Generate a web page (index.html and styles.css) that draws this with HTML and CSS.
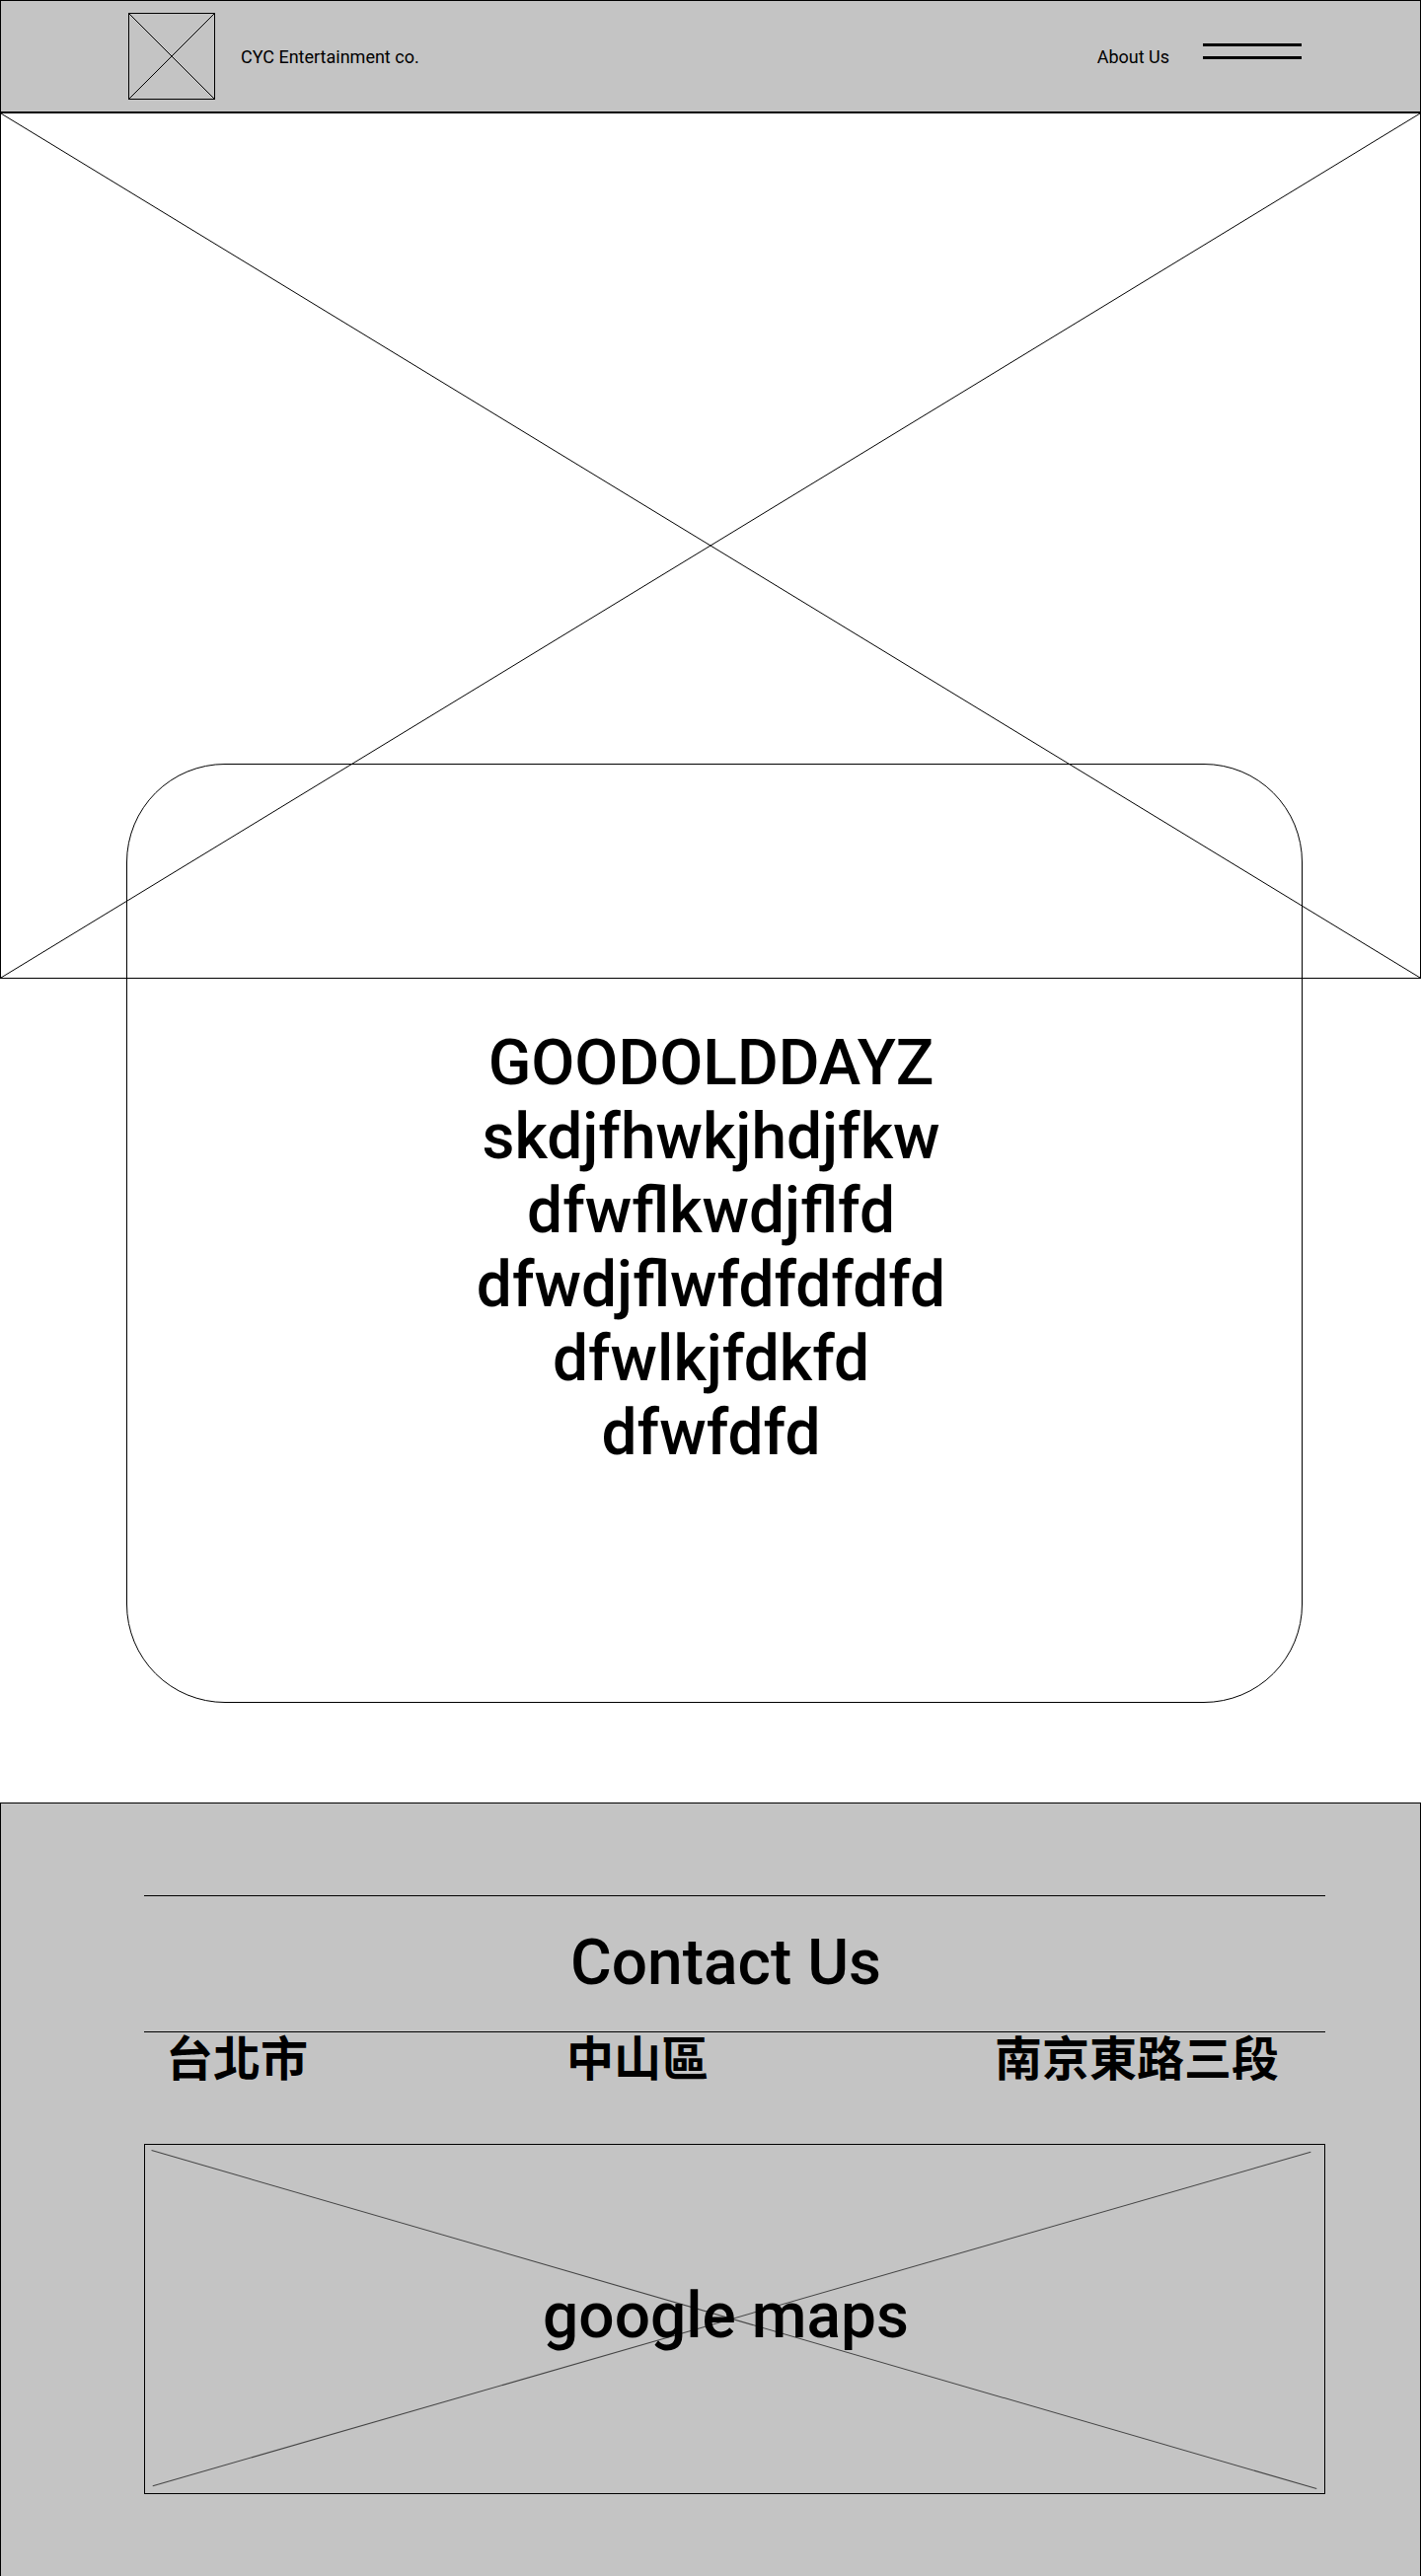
FILE: index.html
```html
<!DOCTYPE html>
<html lang="zh-Hant">
<head>
<meta charset="utf-8">
<title>CYC Entertainment co.</title>
<link rel="stylesheet" href="styles.css">
</head>
<body>
<header class="topbar">
  <div class="brand">
    <div class="logo">
      <svg class="xmark" viewBox="0 0 100 100" preserveAspectRatio="none" aria-hidden="true">
        <line x1="0" y1="0" x2="100" y2="100" vector-effect="non-scaling-stroke"/>
        <line x1="100" y1="0" x2="0" y2="100" vector-effect="non-scaling-stroke"/>
      </svg>
    </div>
    <span class="brand-name">CYC Entertainment co.</span>
  </div>
  <nav class="nav">
    <a class="nav-link" href="#">About Us</a>
    <button class="menu" type="button" aria-label="menu"><span class="menu-bar"></span><span class="menu-bar"></span></button>
  </nav>
</header>

<section class="hero">
  <svg class="xmark" viewBox="0 0 100 100" preserveAspectRatio="none" aria-hidden="true">
    <line x1="0" y1="0" x2="100" y2="100" vector-effect="non-scaling-stroke"/>
    <line x1="100" y1="0" x2="0" y2="100" vector-effect="non-scaling-stroke"/>
  </svg>
</section>

<section class="card">
  <p class="card-text">GOODOLDDAYZ<br>skdjfhwkjhdjfkw<br>dfwflkwdjflfd<br>dfwdjflwfdfdfdfd<br>dfwlkjfdkfd<br>dfwfdfd</p>
</section>

<footer class="footer">
  <div class="contact">
    <h2 class="contact-title">Contact Us</h2>
    <div class="address">
      <span class="addr-item">台北市</span>
      <span class="addr-item">中山區</span>
      <span class="addr-item">南京東路三段</span>
    </div>
    <div class="map">
      <svg class="map-x" viewBox="0 0 100 100" preserveAspectRatio="none" aria-hidden="true">
        <line x1="0.3" y1="1" x2="99.6" y2="99.3" vector-effect="non-scaling-stroke"/>
        <line x1="0.4" y1="98.5" x2="99.1" y2="1.5" vector-effect="non-scaling-stroke"/>
      </svg>
      <span class="map-label">google maps</span>
    </div>
  </div>
</footer>
</body>
</html>
```

FILE: styles.css
```css
* { box-sizing: border-box; }

html, body {
  margin: 0;
  padding: 0;
  background: #ffffff;
}

body {
  font-family: Roboto, "Noto Sans CJK TC", sans-serif;
  color: #000;
  overflow: hidden;
}

.xmark {
  position: absolute;
  inset: 0;
  width: 100%;
  height: 100%;
  stroke: #000;
  stroke-width: 1;
}

/* Header */
.topbar {
  height: 114px;
  background: #c4c4c4;
  border: 1px solid #000;
  display: flex;
  align-items: center;
  justify-content: space-between;
  padding: 0 120px 0 129px;
}

.brand {
  display: flex;
  align-items: center;
  gap: 26px;
}

.logo {
  position: relative;
  width: 88px;
  height: 88px;
  border: 1px solid #000;
}

.brand-name,
.nav-link {
  font-size: 18px;
  line-height: 21px;
  color: #000;
  text-decoration: none;
}

.nav {
  display: flex;
  align-items: center;
  gap: 34px;
}

.menu {
  display: flex;
  flex-direction: column;
  gap: 10px;
  width: 100px;
  padding: 0;
  margin: 0 0 11px 0;
  border: 0;
  background: transparent;
}

.menu-bar {
  display: block;
  width: 100px;
  height: 3px;
  background: #000;
}

/* Hero */
.hero {
  position: relative;
  height: 878px;
  border: 1px solid #000;
}

/* Card */
.card {
  position: relative;
  width: 1192px;
  height: 952px;
  margin: -218px 0 0 128px;
  border: 1px solid #000;
  border-radius: 100px;
  padding: 265px 7px 0 0;
}

.card-text {
  margin: 0;
  text-align: center;
  font-size: 64px;
  line-height: 75px;
  font-weight: 500;
}

/* Footer */
.footer {
  margin-top: 101px;
  height: 784px;
  background: #c4c4c4;
  border: 1px solid #000;
  border-bottom: 0;
  padding: 93px 0 0 145px;
}

.contact {
  width: 1197px;
}

.contact-title {
  margin: 0;
  height: 139px;
  border-top: 1px solid #000;
  border-bottom: 1px solid #000;
  padding: 30px 18px 0 0;
  text-align: center;
  font-size: 64px;
  line-height: 75px;
  font-weight: 500;
}

.address {
  display: grid;
  grid-template-columns: 406px 434px 1fr;
  padding-left: 22px;
  margin-top: -1px;
  font-family: "Noto Sans CJK TC", sans-serif;
  font-weight: 700;
  font-size: 48px;
  line-height: 48px;
}

.map {
  position: relative;
  height: 355px;
  margin-top: 66px;
  border: 1px solid #000;
  display: flex;
  align-items: center;
  justify-content: center;
  padding: 0 18px 6px 0;
}

.map-x {
  position: absolute;
  inset: 2px 3px 2px 3px;
  width: calc(100% - 6px);
  height: calc(100% - 4px);
  stroke: #444;
  stroke-width: 1;
}

.map-label {
  position: relative;
  font-size: 64px;
  line-height: 75px;
  font-weight: 500;
}
```
